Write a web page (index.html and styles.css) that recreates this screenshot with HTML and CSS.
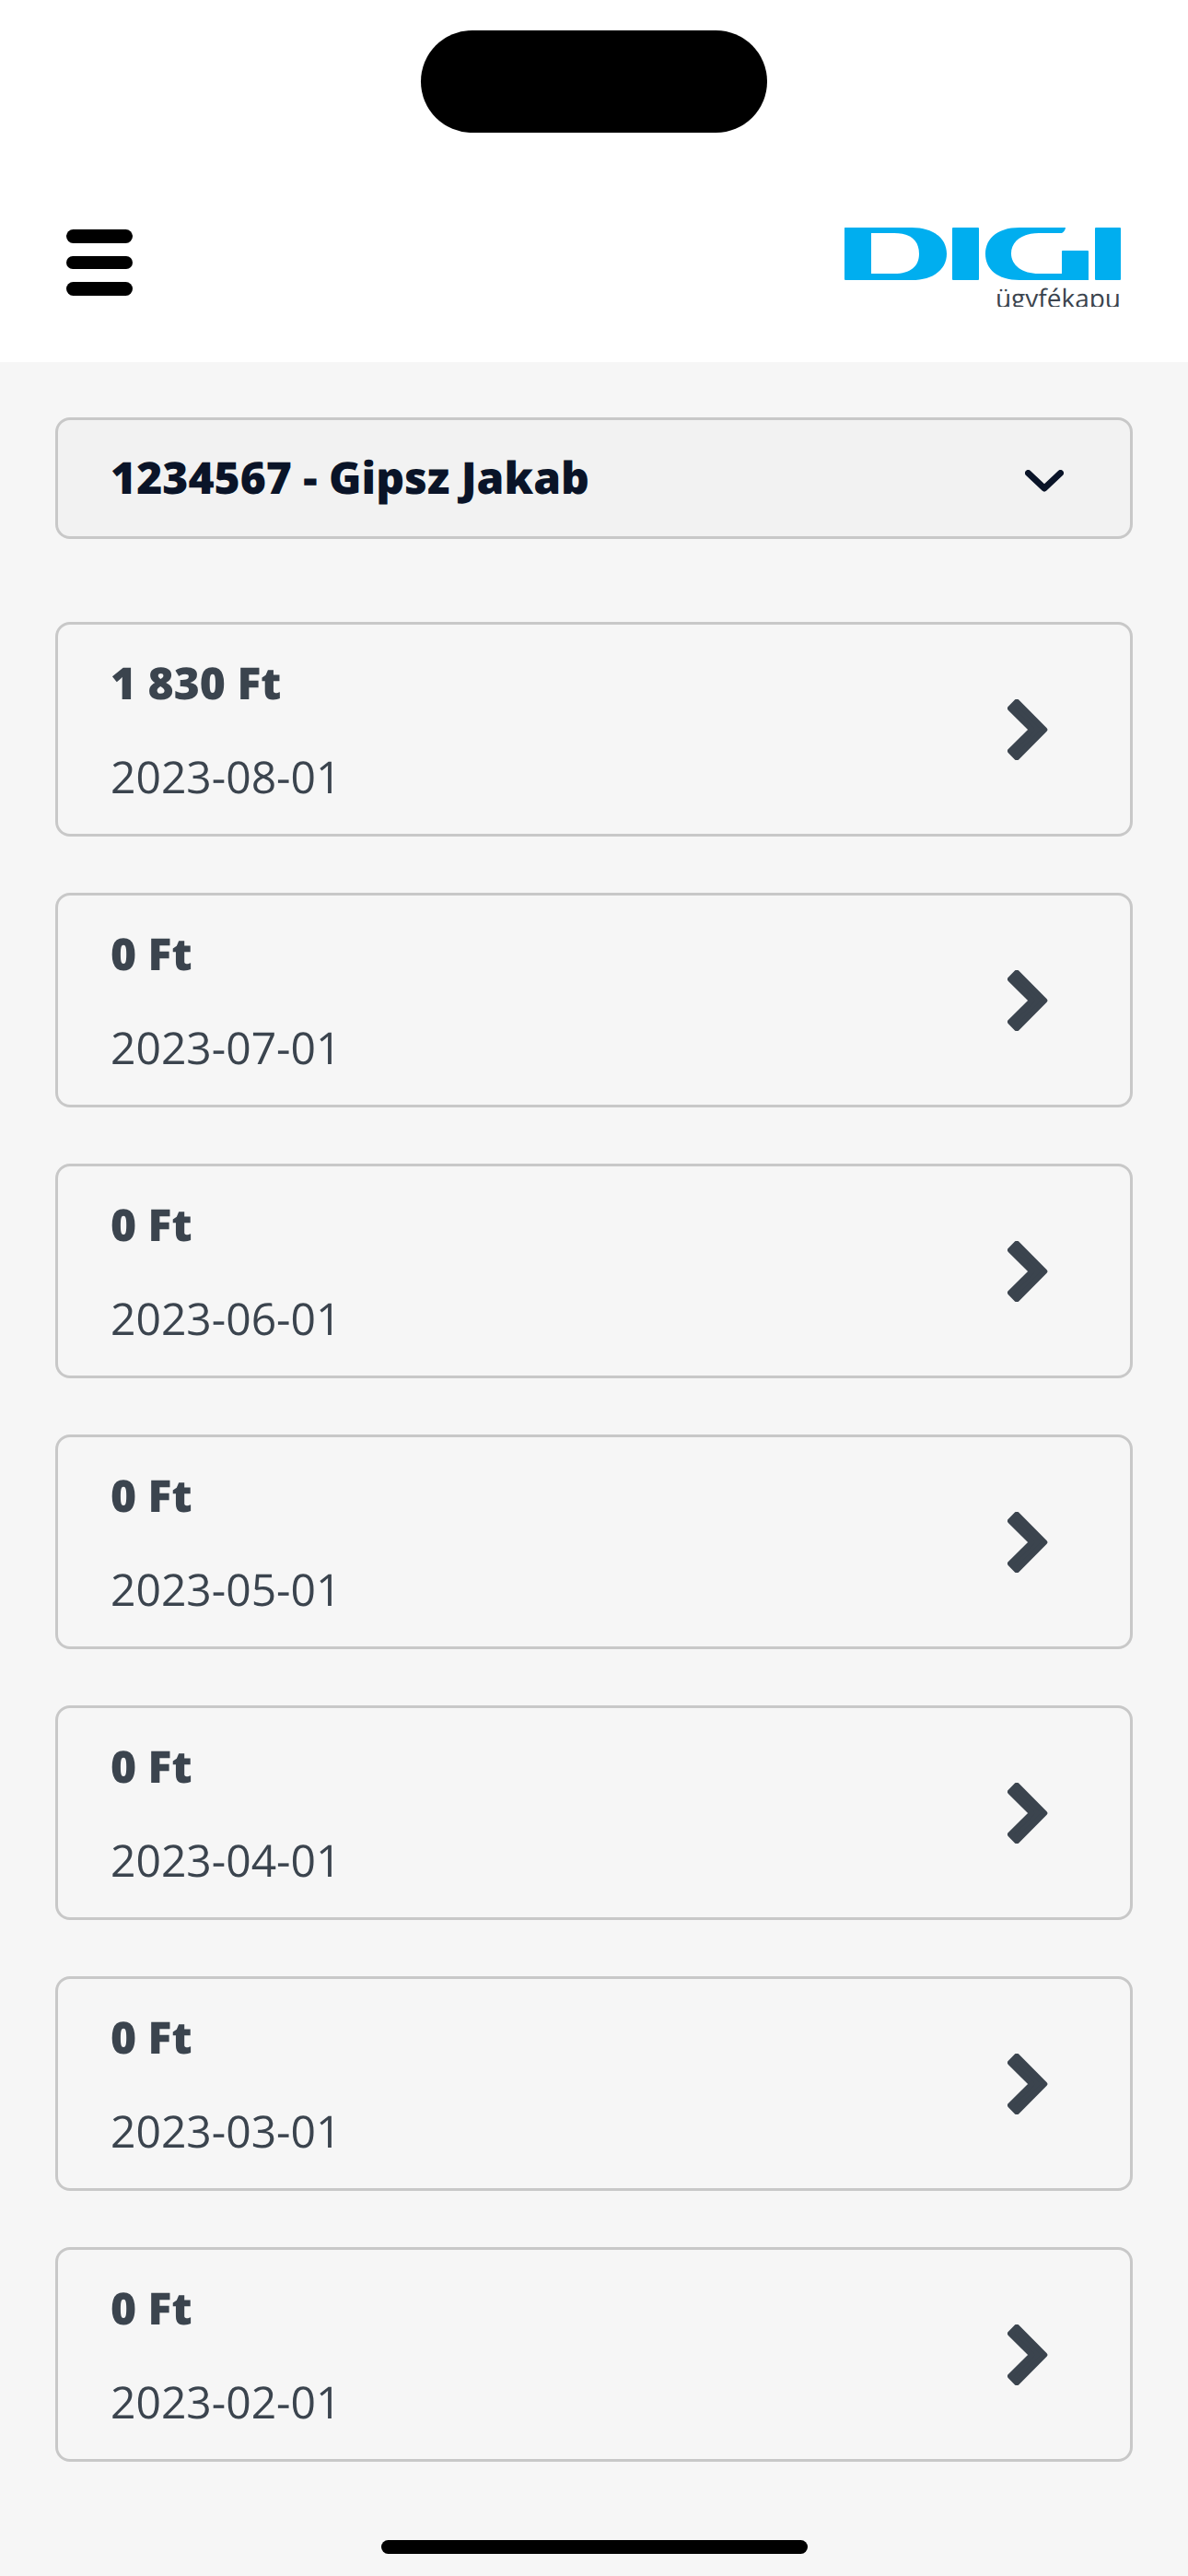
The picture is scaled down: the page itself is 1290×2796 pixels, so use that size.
FILE: index.html
```html
<!DOCTYPE html>
<html lang="hu">
<head>
<meta charset="utf-8">
<title>Számlák</title>
<link rel="stylesheet" href="styles.css">
</head>
<body>
<div class="island"></div>
<header class="topbar">
  <svg class="burger" viewBox="0 0 72 72" aria-label="Menü">
    <rect x="0" y="0" width="72" height="15" rx="7.5"/>
    <rect x="0" y="29" width="72" height="14" rx="7"/>
    <rect x="0" y="57" width="72" height="15" rx="7.5"/>
  </svg>
  <div class="logo">
    <svg class="logo-mark" viewBox="0 0 300 57" aria-label="DIGI">
      <path fill-rule="evenodd" d="M1 0H73C97 0 111 12 111 28.500C111 45 97 57 73 57H1C0 57 0 56 0 56V1C0 0 0 0 1 0ZM29 6V50H54C72 50 81 42 81 28.500C81 14 72 6 54 6Z"/>
      <rect x="117" y="0" width="29" height="57" rx="1"/>
      <path d="M190 0H240C240 2 238 5 236 6H211C193 6 181 15 181 28C181 41 193 50 211 50H236V26C236 25.500 236.500 25 237 25H264C264.500 25 265 25.500 265 26V57H190C166 57 153 45 153 28.500C153 12 166 0 190 0Z"/>
      <rect x="272" y="0" width="28" height="57" rx="1"/>
    </svg>
    <div class="logo-sub"><span>ügyfékapu</span></div>
  </div>
</header>
<main class="content">
  <div class="select">
    <span class="select-text">1234567 - Gipsz Jakab</span>
    <svg class="select-caret" viewBox="0 0 42 24"><path d="M3.500 3.500L21 20L38.500 3.500"/></svg>
  </div>
  <ul class="list">
    <li class="card"><div class="card-text"><div class="amount">1 830 Ft</div><div class="date">2023-08-01</div></div><svg class="chevron" viewBox="0 0 44 66"><path d="M3 9.800L10.070 2.730L40.300 33L10.070 63.270L3 56.200L26.200 33Z"/></svg></li>
    <li class="card"><div class="card-text"><div class="amount">0 Ft</div><div class="date">2023-07-01</div></div><svg class="chevron" viewBox="0 0 44 66"><path d="M3 9.800L10.070 2.730L40.300 33L10.070 63.270L3 56.200L26.200 33Z"/></svg></li>
    <li class="card"><div class="card-text"><div class="amount">0 Ft</div><div class="date">2023-06-01</div></div><svg class="chevron" viewBox="0 0 44 66"><path d="M3 9.800L10.070 2.730L40.300 33L10.070 63.270L3 56.200L26.200 33Z"/></svg></li>
    <li class="card"><div class="card-text"><div class="amount">0 Ft</div><div class="date">2023-05-01</div></div><svg class="chevron" viewBox="0 0 44 66"><path d="M3 9.800L10.070 2.730L40.300 33L10.070 63.270L3 56.200L26.200 33Z"/></svg></li>
    <li class="card"><div class="card-text"><div class="amount">0 Ft</div><div class="date">2023-04-01</div></div><svg class="chevron" viewBox="0 0 44 66"><path d="M3 9.800L10.070 2.730L40.300 33L10.070 63.270L3 56.200L26.200 33Z"/></svg></li>
    <li class="card"><div class="card-text"><div class="amount">0 Ft</div><div class="date">2023-03-01</div></div><svg class="chevron" viewBox="0 0 44 66"><path d="M3 9.800L10.070 2.730L40.300 33L10.070 63.270L3 56.200L26.200 33Z"/></svg></li>
    <li class="card"><div class="card-text"><div class="amount">0 Ft</div><div class="date">2023-02-01</div></div><svg class="chevron" viewBox="0 0 44 66"><path d="M3 9.800L10.070 2.730L40.300 33L10.070 63.270L3 56.200L26.200 33Z"/></svg></li>
  </ul>
</main>
<div class="home-bar"></div>
</body>
</html>
```
FILE: styles.css
```css
* { box-sizing: border-box; }
html, body { margin: 0; padding: 0; }
body {
  position: relative;
  width: 1290px;
  height: 2796px;
  overflow: hidden;
  background: #f6f6f6;
  font-family: "Open Sans", "Liberation Sans", sans-serif;
  color: #3b444e;
  text-rendering: geometricPrecision;
}
.island {
  position: absolute;
  left: 457px;
  top: 33px;
  width: 376px;
  height: 111px;
  border-radius: 56px;
  background: #000;
}
.topbar {
  height: 393px;
  background: #fff;
  padding: 246px 73px 0 72px;
  display: flex;
  justify-content: space-between;
  align-items: flex-start;
}
.burger { width: 72px; height: 72px; margin-top: 3px; fill: #000; display: block; }
.logo { width: 300px; margin-top: 1px; display: flex; flex-direction: column; align-items: flex-end; }
.logo-mark { width: 300px; height: 57px; fill: #00aeef; display: block; }
.logo-sub {
  height: 29px;
  overflow: hidden;
  font-size: 28px;
  line-height: 40px;
  color: #3b444e;
  white-space: nowrap;
}
.content { padding: 60px 60px 0; will-change: opacity; }
.select {
  height: 132px;
  border: 3px solid #c8c8c8;
  border-radius: 16px;
  background: #f2f2f2;
  padding: 0 72px 0 57px;
  display: flex;
  align-items: center;
  justify-content: space-between;
}
.select-text { font-size: 48px; font-weight: 800; color: #0a1428; margin-bottom: 2px; }
.select-caret { width: 42px; height: 24px; margin-top: 5px; fill: none; stroke: #0a1428; stroke-width: 7px; stroke-linecap: round; stroke-linejoin: round; }
.list { list-style: none; margin: 90px 0 0; padding: 0; display: flex; flex-direction: column; gap: 61px; }
.card {
  height: 233px;
  border: 3px solid #c8c8c8;
  border-radius: 16px;
  padding: 0 89px 0 57px;
  display: flex;
  align-items: center;
  justify-content: space-between;
}
.card-text { display: flex; flex-direction: column; gap: 37px; margin-top: 2px; }
.amount { font-size: 48px; font-weight: 800; line-height: 65px; }
.date { font-size: 48px; line-height: 65px; }
.chevron { width: 44px; height: 66px; fill: #3b444e; stroke: #3b444e; stroke-width: 6px; stroke-linejoin: round; }
.home-bar {
  position: absolute;
  left: 414px;
  top: 2757px;
  width: 463px;
  height: 15px;
  border-radius: 8px;
  background: #000;
}
```
